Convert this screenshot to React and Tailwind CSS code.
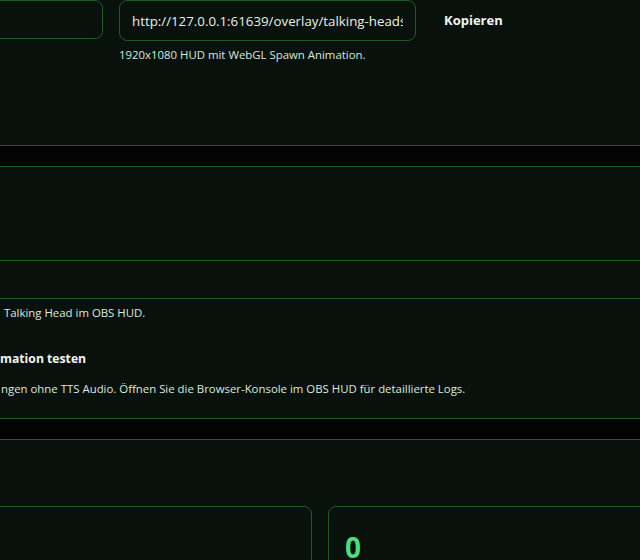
export default function App() {
  return (
    <div className="w-[640px] h-[560px] overflow-hidden bg-[#020402] font-['Open_Sans',sans-serif] text-[#d6e8d8]">
      {/* overlay url */}
      <section className="h-[146px] bg-[#08110b] border-b border-[#1f5a29]">
        <div className="flex items-start">
          <div className="-ml-[40px] w-[143px] h-[39px] shrink-0 rounded-lg border border-[#1f5a29] bg-[#08110b]" />
          <div className="ml-[16px]">
            <div className="flex items-center">
              <input
                readOnly
                value="http://127.0.0.1:61639/overlay/talking-heads"
                className="w-[297px] h-[41px] rounded-lg border border-[#1f5a29] bg-[#08110b] pl-[12px] pr-3 text-[13.3px] text-[#e8f1e8] outline-none font-['Open_Sans',sans-serif]"
              />
              <button className="h-[41px] px-[28px] text-[13px] font-bold text-[#f2f6f2]">
                Kopieren
              </button>
            </div>
            <p className="mt-[6px] text-[11.4px] leading-4 text-[#d8ebdb]">
              1920x1080 HUD mit WebGL Spawn Animation.
            </p>
          </div>
        </div>
      </section>

      {/* animation test */}
      <section className="mt-5 h-[253px] bg-[#08110b] border-y border-[#1f5a29] flex flex-col">
        <div className="h-[94px] shrink-0 border-b border-[#1f5a29]" />
        <div className="h-[38px] shrink-0 border-b border-[#1f5a29]" />
        <div className="pt-[6px]">
          <p className="pl-[4px] text-[11.4px] leading-4 text-[#dcebdd]">Talking Head im OBS HUD.</p>
          <h3 className="mt-[28px] text-[12.2px] font-bold leading-5 text-[#f2f6f2]">mation testen</h3>
          <p className="mt-[12px] pl-[1px] text-[11.4px] leading-4 text-[#dcebdd]">
            ngen ohne TTS Audio. Öffnen Sie die Browser-Konsole im OBS HUD für detaillierte Logs.
          </p>
        </div>
      </section>

      {/* stats */}
      <section className="mt-5 h-[200px] bg-[#08110b] border-t border-[#1f5a29] pt-[66px]">
        <div className="flex gap-4 -ml-[60px]">
          <div className="w-[372px] h-[120px] shrink-0 rounded-lg border border-[#1f5a29]" />
          <div className="w-[372px] h-[120px] shrink-0 rounded-lg border border-[#1f5a29] pl-[16px] pt-[24px]">
            <div className="text-[28px] font-bold leading-8 text-[#4ade80]">0</div>
          </div>
        </div>
      </section>
    </div>
  );
}
